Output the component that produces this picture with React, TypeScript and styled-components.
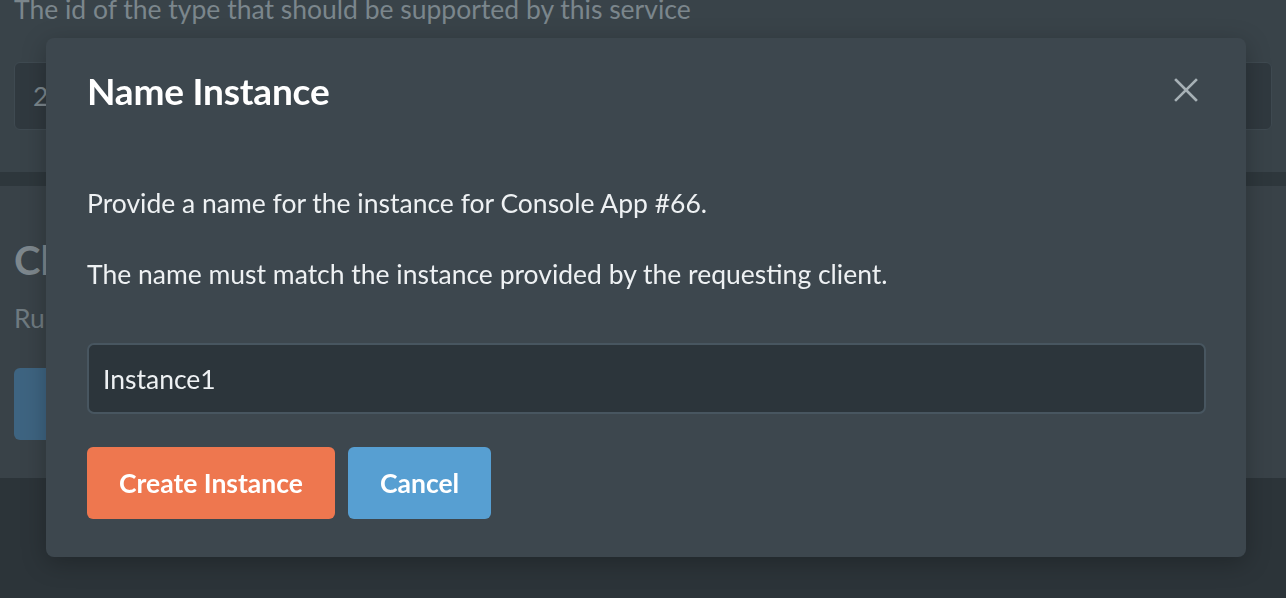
import React from "react";
import styled, { createGlobalStyle } from "styled-components";

const GlobalStyle = createGlobalStyle`
  html, body {
    margin: 0;
    padding: 0;
    height: 598px;
    overflow: hidden;
    background: #2c3439;
    font-family: Lato, "Open Sans", sans-serif;
  }
`;

const Page = styled.div`
  height: 598px;
  display: flex;
  flex-direction: column;
  background: #2c3439;
`;

const TopSection = styled.div`
  height: 172px;
  padding: 0 14px;
  box-sizing: border-box;
  background: #394349;
`;

const Hint = styled.p`
  margin: -9px 0 0;
  font-size: 26.5px;
  line-height: 36px;
  color: #7b868c;
`;

const BackInput = styled.div`
  margin-top: 35px;
  height: 68px;
  border: 1px solid #3f4a51;
  border-radius: 6px;
  background: #30393f;
  box-sizing: border-box;
  display: flex;
  align-items: center;
  padding: 0 18px;
  font-size: 26.5px;
  color: #7b868c;
`;

const Divider = styled.div`
  height: 14px;
  background: #2e373c;
`;

const MidSection = styled.div`
  height: 292px;
  padding: 50px 14px 0;
  box-sizing: border-box;
  background: #394248;
`;

const BackHeading = styled.h2`
  margin: 0;
  font-size: 40px;
  line-height: 48px;
  font-weight: 700;
  color: #7d878d;
`;

const BackText = styled.p`
  margin: 16px 0 0;
  font-size: 26.5px;
  line-height: 36px;
  color: #6f7a80;
`;

const BackButton = styled.div`
  margin-top: 32px;
  width: 180px;
  height: 72px;
  border-radius: 6px;
  background: #3e6481;
`;

const Overlay = styled.div`
  position: fixed;
  inset: 0;
  padding: 38px 0 0 46px;
  box-sizing: border-box;
`;

const Modal = styled.div`
  width: 1200px;
  height: 519px;
  box-sizing: border-box;
  background: #3d474e;
  border-radius: 8px;
  box-shadow: 0 6px 24px rgba(0, 0, 0, 0.25);
  padding: 28px 41px 0;
  display: flex;
  flex-direction: column;
`;

const Header = styled.div`
  display: flex;
  align-items: center;
  justify-content: space-between;
  height: 48px;
`;

const Title = styled.h1`
  margin: 0;
  font-size: 37px;
  font-weight: 700;
  color: #ffffff;
  letter-spacing: -0.2px;
`;

const CloseButton = styled.button`
  width: 30px;
  height: 30px;
  margin-right: 4px;
  padding: 0;
  border: none;
  background: transparent;
  display: flex;
  align-items: center;
  justify-content: center;
  cursor: pointer;
`;

const Body = styled.div`
  margin-top: 71px;
  display: flex;
  flex-direction: column;
`;

const Paragraph = styled.p`
  margin: 0 0 35px;
  font-size: 26.5px;
  line-height: 36px;
  color: #eef1f3;
`;

const NameInput = styled.input`
  margin-top: 16px;
  width: 1119px;
  height: 71px;
  box-sizing: border-box;
  border: 2px solid #485660;
  border-radius: 7px;
  background: #2c353b;
  padding: 0 14px;
  font-family: inherit;
  font-size: 26.5px;
  color: #eef1f3;
  outline: none;
`;

const Actions = styled.div`
  margin-top: 33px;
  display: flex;
  gap: 13px;
`;

const Button = styled.button<{ $tone: "primary" | "secondary" }>`
  height: 72px;
  padding: 0 32px;
  border: none;
  border-radius: 6px;
  background: ${(p) => (p.$tone === "primary" ? "#ee774f" : "#579fd2")};
  color: #ffffff;
  font-family: inherit;
  font-size: 26.5px;
  font-weight: 700;
  cursor: pointer;
`;

export default function App() {
  return (
    <>
      <GlobalStyle />
      <Page>
        <TopSection>
          <Hint>The id of the type that should be supported by this service</Hint>
          <BackInput>2</BackInput>
        </TopSection>
        <Divider />
        <MidSection>
          <BackHeading>Client</BackHeading>
          <BackText>Run</BackText>
          <BackButton />
        </MidSection>
      </Page>
      <Overlay>
        <Modal>
          <Header>
            <Title>Name Instance</Title>
            <CloseButton aria-label="Close">
              <svg width="24" height="24" viewBox="0 0 24 24">
                <path
                  d="M2 2 L22 22 M22 2 L2 22"
                  stroke="#a7b1b6"
                  strokeWidth="2.6"
                  strokeLinecap="square"
                />
              </svg>
            </CloseButton>
          </Header>
          <Body>
            <Paragraph>Provide a name for the instance for Console App #66.</Paragraph>
            <Paragraph>The name must match the instance provided by the requesting client.</Paragraph>
            <NameInput defaultValue="Instance1" />
            <Actions>
              <Button $tone="primary">Create Instance</Button>
              <Button $tone="secondary">Cancel</Button>
            </Actions>
          </Body>
        </Modal>
      </Overlay>
    </>
  );
}
